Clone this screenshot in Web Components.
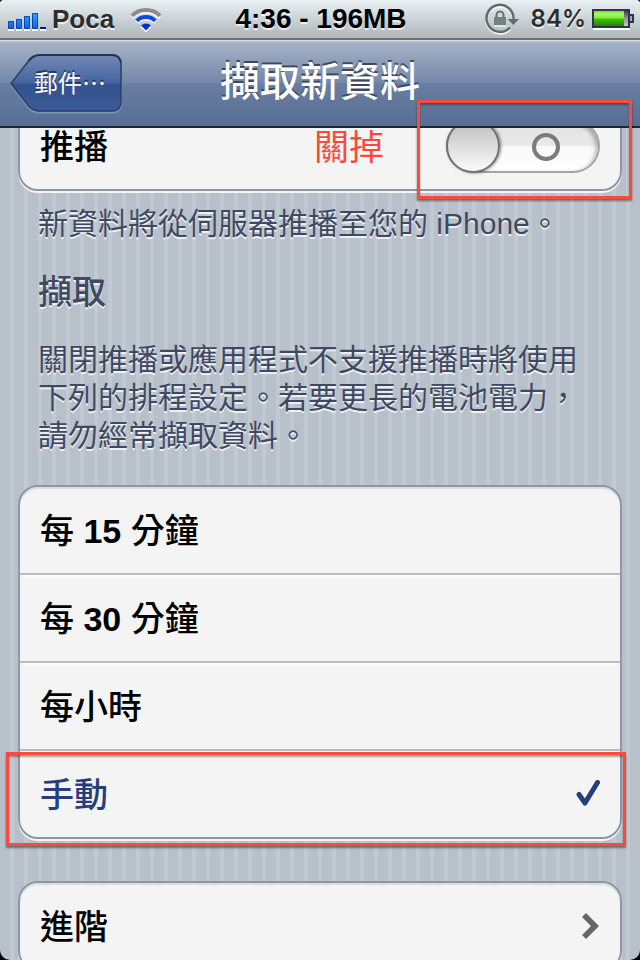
<!DOCTYPE html>
<html lang="zh-Hant">
<head>
<meta charset="utf-8">
<meta name="viewport" content="width=device-width, initial-scale=1">
<title>擷取新資料</title>
<style>
  html {
    background: #000;
  }

  body {
    margin: 0;
    height: 100vh;
    overflow: hidden;
    font-family: "Liberation Sans", "Noto Sans CJK TC", sans-serif;
    font-size: 34px;
    color: #000;
    --line: #8e98a5;
    --ink: #3f4963;
    --blue: #263f7c;
    --red: #f94a3f;
  }
</style>
</head>
<body>
  <phone-screen>
    <status-bar slot="top" carrier="Poca" battery="84%">4:36 - 196MB</status-bar>
    <nav-bar slot="top" back="郵件…">擷取新資料</nav-bar>

    <table-group class="first">
      <switch-row note="關掉" marked>推播</switch-row>
    </table-group>
    <group-note>新資料將從伺服器推播至您的 iPhone。</group-note>
    <group-note heading="擷取">關閉推播或應用程式不支援推播時將使用下列的排程設定。若要更長的電池電力，請勿經常擷取資料。</group-note>
    <table-group>
      <choice-row>每 <b>15</b> 分鐘</choice-row>
      <choice-row>每 <b>30</b> 分鐘</choice-row>
      <choice-row>每小時</choice-row>
      <choice-row checked marked>手動</choice-row>
    </table-group>
    <table-group>
      <link-row>進階</link-row>
    </table-group>
  </phone-screen>

<script>
  function attach(element, html) {
    const template = document.createElement('template');
    template.innerHTML = html;
    element.attachShadow({ mode: 'open' });
    element.shadowRoot.appendChild(template.content.cloneNode(true));
  }

  // shared by every kind of row
  const rowStyle = `
    :host {
      display: block;
      position: relative;
      height: 86px;
      border-bottom: 2px solid #bcbcbe;
      box-shadow: inset 0 2px #fcfcfc;
      font-weight: 500;
    }
    :host(:first-child) { box-shadow: none; }
    :host(:last-child) { border-bottom: none; }
    .row {
      display: flex;
      align-items: center;
      box-sizing: border-box;
      height: 100%;
      padding: 0 20px;
      color: inherit;
      text-decoration: none;
    }
    .title { flex: 1; }
    .title, .note { padding-bottom: 4px; }
  `;

  class PhoneScreen extends HTMLElement {
    constructor() {
      super();
      attach(this, `
        <style>
          :host {
            display: block;
            height: 100%;
            overflow: hidden;
            border-radius: 4px 4px 10px 10px;
            background: repeating-linear-gradient(90deg, #b8c0ca 0 10px, #c1c9d1 10px 14px);
          }
          header { position: relative; z-index: 1; }
          main { display: flow-root; padding: 0 18px; }
          /* the list is scrolled a little way under the bars */
          ::slotted(.first) { margin-top: -27px; }
        </style>
        <header><slot name="top"></slot></header>
        <main><slot></slot></main>
      `);
    }
  }

  class StatusBar extends HTMLElement {
    constructor() {
      super();
      attach(this, `
        <style>
          :host {
            display: grid;
            grid-template-columns: 1fr auto 1fr;
            align-items: center;
            box-sizing: border-box;
            height: 40px;
            padding: 0 6px 0 8px;
            border-bottom: 2px solid #6a7276;
            background: linear-gradient(#e9f1f5, #ccd3d6 50%, #aeb6bb);
            font-size: 28px;
            font-weight: bold;
            line-height: 38px;
            text-shadow: 0 2px rgba(255, 255, 255, .7);
          }
          div { display: flex; align-items: center; }
          svg { display: block; }
          .left { gap: 6px; font-size: 26px; color: #2d2d2d; }
          .wifi { margin-left: 10px; }
          .right { justify-content: flex-end; gap: 6px; }
          .battery-level {
            margin-left: 6px;
            font: 600 24px/38px Inter, sans-serif;
            color: #2d2d2d;
          }
        </style>
        <div class="left">
          <svg width="38" height="24" viewBox="0 0 38 24" aria-label="signal">
            <defs><linearGradient id="s" x2="0" y2="1"><stop stop-color="#29a8ff"/><stop offset="1" stop-color="#0b62e8"/></linearGradient></defs>
            <path d="M0 23h6M8 23h6M16 23h6M24 23h6M32 23h6" stroke="#fff" stroke-width="2"/>
            <g fill="url(#s)" stroke="#0b43b4">
              <path d="M.5 14.500h5v7h-5zM8.500 12.500h5v9h-5zM16.500 9.500h5v12h-5zM24.500 6.500h5v15h-5z"/>
            </g>
            <path d="M32 20h6v2h-6z" fill="#10139b"/>
          </svg>
          <span class="carrier"></span>
          <svg class="wifi" width="32" height="26" viewBox="0 0 32 26" aria-label="wifi">
            <g id="fan" fill="none" stroke="#fff" transform="translate(0 1.500)">
              <path d="M1.900 9.900A20 20 0 0 1 30.100 9.900M6.800 14.800A13 13 0 0 1 25.200 14.800" stroke-width="4"/>
              <path d="M11.100 19.500A7 7 0 0 1 20.900 19.500L16 24.500z" fill="#fff"/>
            </g>
            <path d="M1.900 9.900A20 20 0 0 1 30.100 9.900" fill="none" stroke="#8c8c8c" stroke-width="4"/>
            <path d="M6.800 14.800A13 13 0 0 1 25.200 14.800" fill="none" stroke="#0d4be0" stroke-width="4"/>
            <path d="M11.100 19.500A7 7 0 0 1 20.900 19.500L16 24.500z" fill="#0a2fc5"/>
          </svg>
        </div>
        <slot></slot>
        <div class="right">
          <svg width="34" height="32" viewBox="0 0 34 32" aria-label="rotation lock">
            <path d="M28.500 16A13.500 13.500 0 1 0 25 24.500" fill="none" stroke="#fff" stroke-width="2.500" transform="translate(0 1.500)"/>
            <path d="M28.500 16A13.500 13.500 0 1 0 25 24.500" fill="none" stroke="#5f6c70" stroke-width="2.500"/>
            <path d="M22.500 16H34l-5.700 6z" fill="#5f6c70"/>
            <path d="M9 14h12v8H9z" fill="#75817f"/>
            <path d="M11.500 14.500V12a3.500 3.500 0 0 1 7 0v2.500" fill="none" stroke="#66736f" stroke-width="2"/>
            <path d="M9 23h12" stroke="#fff"/>
          </svg>
          <span class="battery-level"></span>
          <svg width="42" height="22" viewBox="0 0 42 22" aria-label="battery">
            <defs>
              <linearGradient id="g" x2="0" y2="1"><stop stop-color="#74e13b"/><stop offset=".2" stop-color="#a3fa5d"/><stop offset=".48" stop-color="#7aec3a"/><stop offset=".52" stop-color="#42c40a"/><stop offset="1" stop-color="#267f05"/></linearGradient>
              <linearGradient id="e" x2="0" y2="1"><stop stop-color="#333"/><stop offset=".5" stop-color="#999"/><stop offset="1" stop-color="#ccc"/></linearGradient>
            </defs>
            <path d="M1 21h37" stroke="#fff" stroke-width="2"/>
            <path d="M1 2h36v17H1z" fill="url(#e)" stroke="#2d3450" stroke-width="2"/>
            <path d="M2 3h30v15H2z" fill="url(#g)"/>
            <path d="M38 7h3v7h-3" fill="#a5abb5" stroke="#2d3450" stroke-width="2"/>
          </svg>
        </div>
      `);
      this.shadowRoot.querySelector('.carrier').textContent = this.getAttribute('carrier');
      this.shadowRoot.querySelector('.battery-level').textContent = this.getAttribute('battery');
    }
  }

  class NavBar extends HTMLElement {
    constructor() {
      super();
      attach(this, `
        <style>
          :host {
            display: grid;
            grid-template-columns: 1fr auto 1fr;
            align-items: center;
            height: 86px;
            padding: 0 10px;
            border-bottom: 2px solid #22242b;
            background: linear-gradient(#d5dce6 0 1px, #a7b3c7 2px, #7487a8 50%, #677da1 51%, #596e94);
          }
          h1 {
            margin: 0;
            padding-bottom: 2px;
            font-size: 40px;
            font-weight: 500;
            line-height: 50px;
            color: #fff;
            text-shadow: 0 -2px #3d4860;
          }
          button {
            position: relative;
            justify-self: start;
            height: 58px;
            margin: 0;
            padding: 0 16px 2px 24px;
            border: none;
            background: none;
            font: 400 24px/56px "Noto Sans CJK TC", sans-serif;
            color: #fff;
            text-shadow: 0 -2px #24365a;
          }
          svg {
            position: absolute;
            inset: 0;
            width: 100%;
            height: 100%;
            overflow: visible;
          }
          span { position: relative; }
        </style>
        <button type="button">
          <svg viewBox="0 0 112 58" preserveAspectRatio="none">
            <defs><linearGradient id="b" x2="0" y2="1"><stop stop-color="#7189b5"/><stop offset=".5" stop-color="#4464a0"/><stop offset=".52" stop-color="#34528c"/><stop offset="1" stop-color="#3a5c98"/></linearGradient></defs>
            <path d="M1 29.500 18.500 7Q23 1 30 1H102Q111 1 111 10V48Q111 57 102 57H30Q23 57 18.500 52Z" fill="none" stroke="#8193b2" stroke-width="2" transform="translate(0 1.500)"/>
            <path d="M1 29.500 18.500 7Q23 1 30 1H102Q111 1 111 10V48Q111 57 102 57H30Q23 57 18.500 52Z" fill="url(#b)" stroke="#2b3f68" stroke-width="1.500"/>
            <path d="M18.500 7Q23 1 30 1H102Q109 1 111 8" fill="none" stroke="#28334c" stroke-width="2"/>
          </svg>
          <span></span>
        </button>
        <h1><slot></slot></h1>
      `);
      this.shadowRoot.querySelector('span').textContent = this.getAttribute('back');
    }
  }

  class TableGroup extends HTMLElement {
    constructor() {
      super();
      attach(this, `
        <style>
          :host {
            display: block;
            margin-bottom: 42px;
            border: 2px solid var(--line);
            border-radius: 20px;
            background: #f4f4f4;
            box-shadow: 0 2px #f3f5f7, inset 0 2px 1px #dcdcdc;
          }
          :host(.first) { margin-bottom: 14px; }
        </style>
        <slot></slot>
      `);
    }
  }

  class GroupNote extends HTMLElement {
    constructor() {
      super();
      attach(this, `
        <style>
          :host {
            display: block;
            margin-bottom: 30px;
            padding: 0 20px;
            color: var(--ink);
            line-height: 38px;
            text-shadow: 0 2px rgba(255, 255, 255, .75);
          }
          h2 {
            margin: 0 0 30px;
            font-size: 34px;
            font-weight: 500;
          }
          p {
            margin: 0;
            font-size: 30px;
          }
        </style>
        <h2></h2>
        <p><slot></slot></p>
      `);
      const h2 = this.shadowRoot.querySelector('h2');
      if (this.hasAttribute('heading')) {
        h2.textContent = this.getAttribute('heading');
      } else {
        h2.remove();
      }
    }
  }

  // hand-drawn style frame laid over a row
  class RedFrame extends HTMLElement {
    constructor() {
      super();
      attach(this, `
        <style>
          :host {
            position: absolute;
            z-index: 2;
            box-sizing: border-box;
            border: 3px solid var(--red);
            box-shadow: 0 2px 2px rgba(0, 0, 0, .45), inset 0 2px 2px rgba(0, 0, 0, .35);
            pointer-events: none;
          }
        </style>
      `);
    }
  }

  class SwitchRow extends HTMLElement {
    constructor() {
      super();
      attach(this, `
        <style>
          ${rowStyle}
          .note {
            margin-right: 62px;
            font-size: 35px;
            font-weight: 400;
            color: var(--red);
          }
          input {
            appearance: none;
            position: relative;
            width: 154px;
            height: 54px;
            margin: 0;
            border: 2px solid #a5a5a5;
            border-radius: 27px;
            background: linear-gradient(#e2e2e0, #e9e9e8 50%, #f8f8f8 51%, #fff);
            box-shadow: inset -2px 2px 4px rgba(0, 0, 0, .3);
          }
          input::before {
            content: "";
            position: absolute;
            top: -2px;
            left: -2px;
            box-sizing: border-box;
            width: 54px;
            height: 54px;
            border: 2px solid #717171;
            border-radius: 50%;
            background: linear-gradient(#bdbdbd, #fbfbfb);
            box-shadow: 1px 0 3px rgba(0, 0, 0, .5);
          }
          input::after {
            content: "";
            position: absolute;
            top: 12px;
            right: 38px;
            box-sizing: border-box;
            width: 28px;
            height: 28px;
            border: 4px solid #7b7b7b;
            border-radius: 50%;
          }
          input:checked::before { left: 98px; }
          input:checked::after { right: 96px; }
          red-frame { top: -3px; right: -12px; bottom: -10px; width: 215px; }
        </style>
        <div class="row">
          <label class="title" for="toggle"><slot></slot></label>
          <span class="note"></span>
          <input type="checkbox" role="switch" id="toggle">
        </div>
      `);
      this.shadowRoot.querySelector('.note').textContent = this.getAttribute('note');
      if (this.hasAttribute('marked')) {
        this.shadowRoot.appendChild(document.createElement('red-frame'));
      }
    }
  }

  class ChoiceRow extends HTMLElement {
    constructor() {
      super();
      attach(this, `
        <style>
          ${rowStyle}
          :host([checked]) { color: var(--blue); }
          input {
            appearance: none;
            width: 0;
            height: 0;
            margin: 0;
          }
          svg { display: none; }
          input:checked + svg { display: block; }
          red-frame { top: 1px; right: -6px; bottom: -9px; left: -14px; }
        </style>
        <label class="row">
          <span class="title"><slot></slot></span>
          <input type="radio" name="interval">
          <svg width="24" height="28" viewBox="0 0 24 28">
            <path d="M3 14.500 9 23 21.500 2.500" fill="none" stroke="#263f7c" stroke-width="5" stroke-linecap="round" stroke-linejoin="round"/>
          </svg>
        </label>
      `);
      this.input = this.shadowRoot.querySelector('input');
      this.input.checked = this.hasAttribute('checked');
      if (this.hasAttribute('marked')) {
        this.shadowRoot.appendChild(document.createElement('red-frame'));
      }
      // radios in separate shadow roots do not group by name
      this.input.addEventListener('change', () => {
        for (const row of this.parentElement.querySelectorAll('choice-row')) {
          row.input.checked = row === this;
          row.toggleAttribute('checked', row === this);
        }
      });
    }
  }

  class LinkRow extends HTMLElement {
    constructor() {
      super();
      attach(this, `
        <style>${rowStyle}</style>
        <a class="row" href="#">
          <span class="title"><slot></slot></span>
          <svg width="20" height="26" viewBox="0 0 20 26">
            <path d="M2 4 6 0 19 13 6 26 2 22 11 13z" fill="#666"/>
          </svg>
        </a>
      `);
    }
  }

  customElements.define('red-frame', RedFrame);
  customElements.define('phone-screen', PhoneScreen);
  customElements.define('status-bar', StatusBar);
  customElements.define('nav-bar', NavBar);
  customElements.define('table-group', TableGroup);
  customElements.define('group-note', GroupNote);
  customElements.define('switch-row', SwitchRow);
  customElements.define('choice-row', ChoiceRow);
  customElements.define('link-row', LinkRow);
</script>
</body>
</html>
